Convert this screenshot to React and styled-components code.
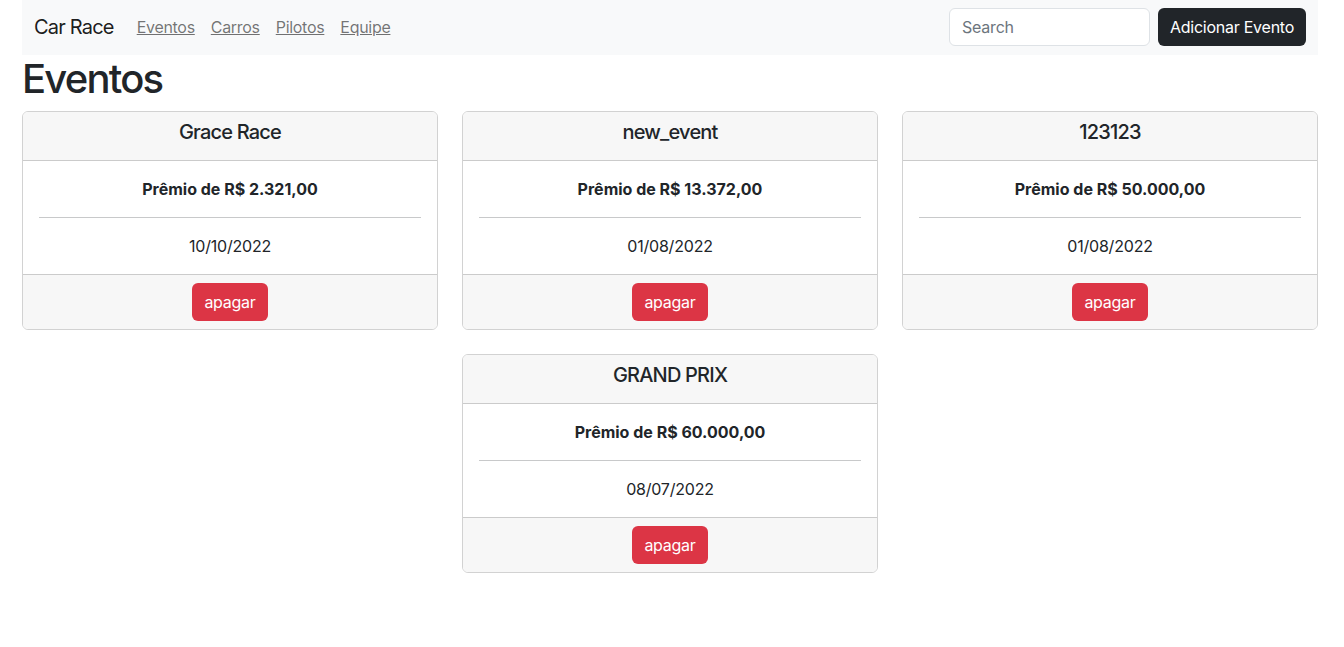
import { createGlobalStyle, styled } from 'styled-components'

const GlobalStyle = createGlobalStyle`
  * { box-sizing: border-box; }
  body {
    margin: 0;
    font-family: Inter, "Noto Sans", sans-serif;
    font-size: 16px;
    line-height: 1.5;
    letter-spacing: -0.2px;
    color: #212529;
    background: #fff;
  }
`

const events = [
  { id: 1, name: 'Grace Race', prize: '2.321,00', date: '10/10/2022' },
  { id: 2, name: 'new_event', prize: '13.372,00', date: '01/08/2022' },
  { id: 3, name: '123123', prize: '50.000,00', date: '01/08/2022' },
  { id: 4, name: 'GRAND PRIX', prize: '60.000,00', date: '08/07/2022' },
]

const Container = styled.div`
  width: 1296px;
  margin: 0 22px;
`

const Nav = styled.nav`
  height: 55px;
  background: #f8f9fa;
  padding: 8px 12px 9px;
  display: flex;
  align-items: center;
`

const Brand = styled.a`
  font-size: 20px;
  line-height: 30px;
  letter-spacing: -0.8px;
  color: rgba(0, 0, 0, 0.9);
  margin-right: 15px;
  text-decoration: none;
`

const Links = styled.div`
  display: flex;
`

const NavLink = styled.a`
  padding: 8px;
  color: rgba(0, 0, 0, 0.55);
  text-decoration: underline;
  font-size: 16px;
  letter-spacing: -0.3px;
`

const SearchForm = styled.form`
  margin-left: auto;
  display: flex;
  gap: 8px;
`

const Input = styled.input`
  width: 201px;
  height: 38px;
  padding: 6px 12px;
  font: inherit;
  letter-spacing: inherit;
  color: #212529;
  border: 1px solid #dee2e6;
  border-radius: 6px;
  background: #fff;
  &::placeholder { color: #6c757d; }
`

const Button = styled.button`
  height: 38px;
  padding: 6px 12px;
  font: inherit;
  letter-spacing: -0.25px;
  border: none;
  border-radius: 6px;
  color: #fff;
  background: ${({ $variant }) => ($variant === 'danger' ? '#dc3545' : '#212529')};
  cursor: pointer;
`

const Title = styled.h1`
  font-size: 40px;
  font-weight: 500;
  line-height: 48px;
  letter-spacing: -1.8px;
  margin: 0 0 8px;
`

const Grid = styled.div`
  display: flex;
  flex-wrap: wrap;
  justify-content: center;
  gap: 24px;
`

const Card = styled.div`
  width: 416px;
  border: 1px solid rgba(0, 0, 0, 0.175);
  border-radius: 6px;
  overflow: hidden;
  text-align: center;
`

const CardHeader = styled.div`
  background: #f7f7f7;
  padding: 8px 16px;
  border-bottom: 1px solid rgba(0, 0, 0, 0.175);

  & h5 {
    margin: 0 0 8px;
    font-size: 20px;
    font-weight: 500;
    line-height: 24px;
    letter-spacing: -0.8px;
  }
`

const CardBody = styled.div`
  padding: 16px;

  & p {
    margin: 0;
  }
`

const Prize = styled.p`
  font-weight: 700;
  letter-spacing: 0;
`

const Divider = styled.hr`
  margin: 16px 0;
  border: 0;
  border-top: 1px solid #c8c9ca;
`

const CardFooter = styled.div`
  background: #f7f7f7;
  padding: 8px 16px;
  border-top: 1px solid rgba(0, 0, 0, 0.175);
`

export default function App() {
  return (
    <>
      <GlobalStyle />
      <Container>
        <Nav>
          <Brand href="#">Car Race</Brand>
          <Links>
            <NavLink href="#">Eventos</NavLink>
            <NavLink href="#">Carros</NavLink>
            <NavLink href="#">Pilotos</NavLink>
            <NavLink href="#">Equipe</NavLink>
          </Links>
          <SearchForm onSubmit={(e) => e.preventDefault()}>
            <Input type="search" placeholder="Search" />
            <Button type="button">Adicionar Evento</Button>
          </SearchForm>
        </Nav>
        <Title>Eventos</Title>
        <Grid>
          {events.map((ev) => (
            <Card key={ev.id}>
              <CardHeader>
                <h5>{ev.name}</h5>
              </CardHeader>
              <CardBody>
                <Prize>Prêmio de R$ {ev.prize}</Prize>
                <Divider />
                <p>{ev.date}</p>
              </CardBody>
              <CardFooter>
                <Button $variant="danger">apagar</Button>
              </CardFooter>
            </Card>
          ))}
        </Grid>
      </Container>
    </>
  )
}
